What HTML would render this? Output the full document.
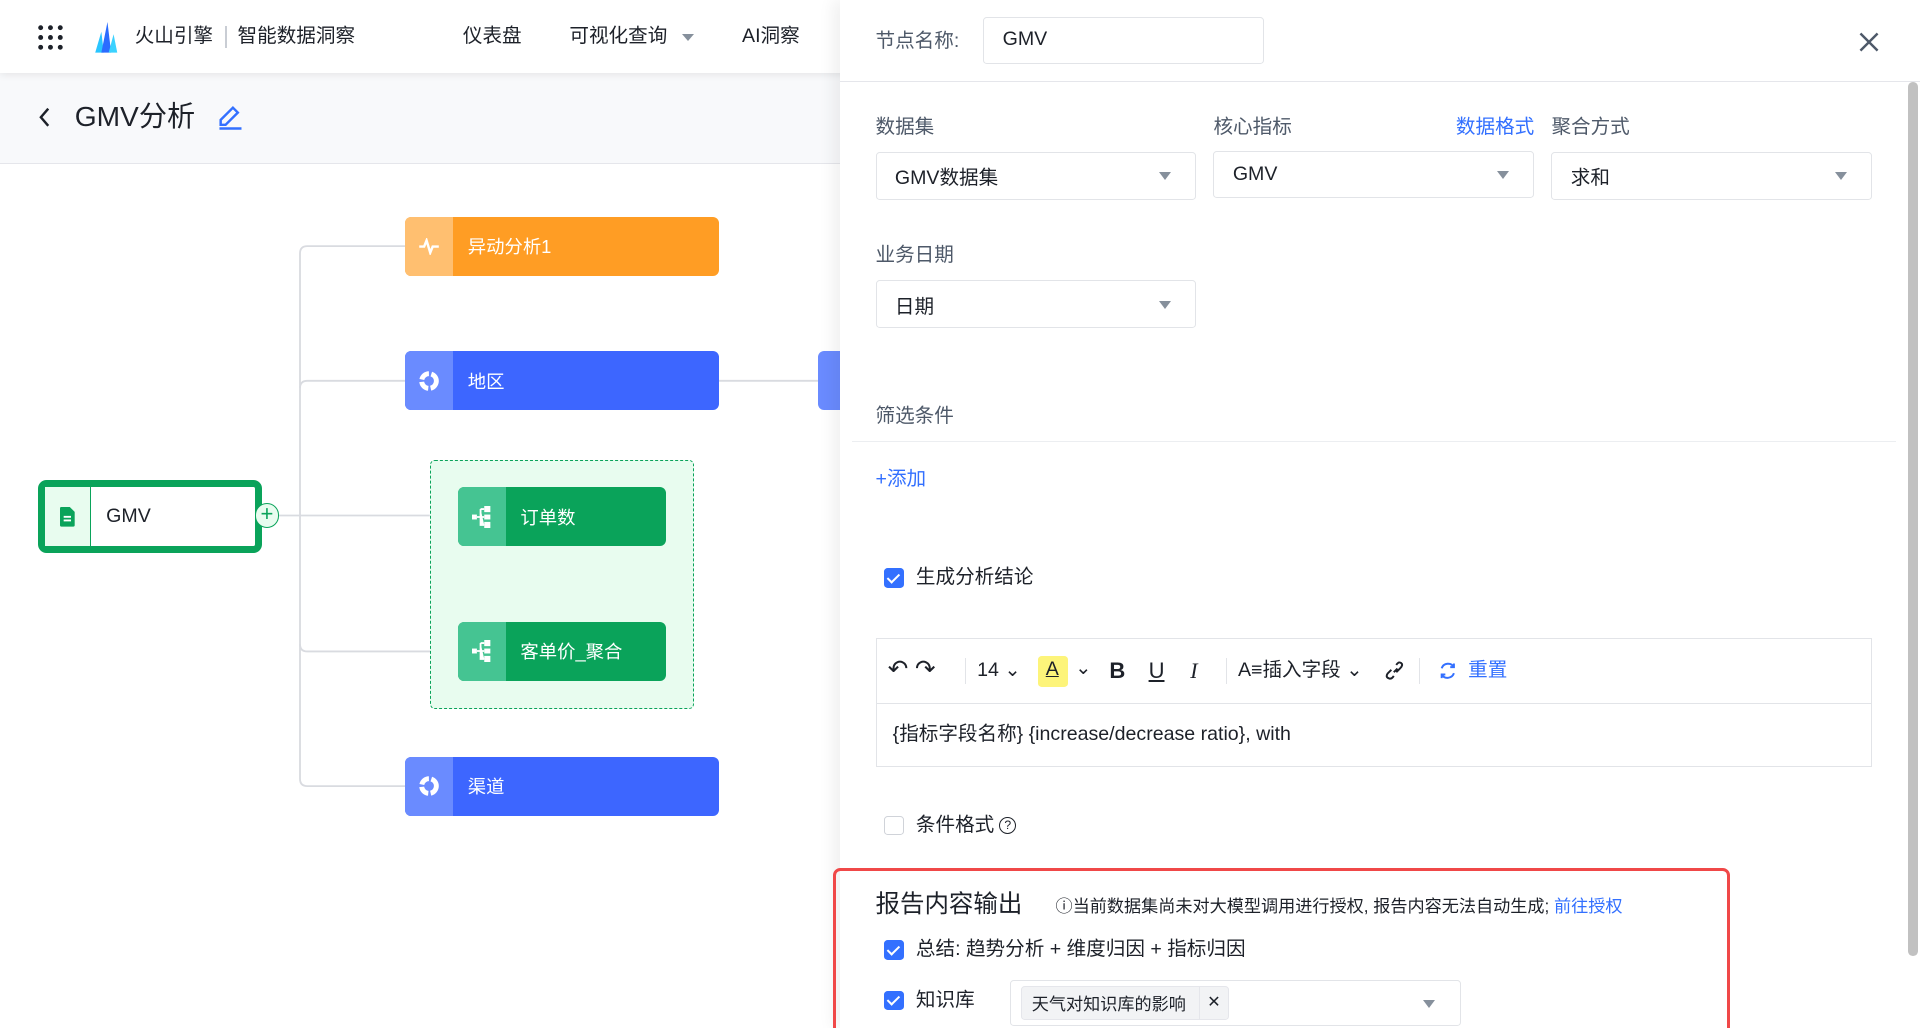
<!DOCTYPE html>
<html><head><meta charset="utf-8"><style>
*{box-sizing:border-box;margin:0;padding:0}
html,body{width:1920px;height:1028px;overflow:hidden;background:#fff}
#z{zoom:1.2245;width:1568px;height:840px;position:relative;font-family:"Liberation Sans","Noto Sans CJK SC",sans-serif;color:#1d2129;overflow:hidden}
.a{position:absolute}
.t{position:absolute;white-space:nowrap;line-height:1}
.node{position:absolute;height:48px;border-radius:5px;color:#fff;font-size:15px;display:flex;align-items:center;overflow:hidden}
.node .ic{width:39px;height:100%;display:flex;align-items:center;justify-content:center}
.node span{margin-left:12px}
.sel{position:absolute;border:1px solid #e2e4e8;border-radius:3px;height:39px;font-size:16px;display:flex;align-items:center;padding-left:15px;background:#fff}
.sel:after{content:"";position:absolute;right:20px;top:16px;border-left:5px solid transparent;border-right:5px solid transparent;border-top:7px solid #86909c}
.lbl{position:absolute;font-size:16px;color:#4e5969;line-height:1}
.cb{position:absolute;width:16px;height:16px;border-radius:3px;background:#3370ff}
.cb:after{content:"";position:absolute;left:5px;top:2px;width:4px;height:8px;border:solid #fff;border-width:0 2px 2px 0;transform:rotate(45deg)}
.cbe{position:absolute;width:16px;height:16px;border-radius:3px;border:1px solid #d0d3d9;background:#fff}
</style></head><body><div id="z">
<!-- left canvas -->
<div class="a" style="left:0;top:60px;width:700px;height:74px;background:#f8f9fb;border-bottom:1px solid #e5e6eb"></div>
<div class="a" style="left:0;top:0;width:700px;height:60px;background:#fff;box-shadow:0 2px 6px rgba(0,0,0,.08)"></div>
<svg class="a" style="left:30px;top:20px" width="22" height="22" viewBox="0 0 22 22" fill="#1d2129"><circle cx="3" cy="3" r="2"/><circle cx="11" cy="3" r="2"/><circle cx="19" cy="3" r="2"/><circle cx="3" cy="11" r="2"/><circle cx="11" cy="11" r="2"/><circle cx="19" cy="11" r="2"/><circle cx="3" cy="19" r="2"/><circle cx="11" cy="19" r="2"/><circle cx="19" cy="19" r="2"/></svg>
<svg class="a" style="left:77px;top:18px" width="20" height="26" viewBox="0 0 20 26"><path d="M1 25 L6 8 L8 25Z" fill="#2ac5ff"/><path d="M6 25 L11 0 L14 25Z" fill="#2b6cff"/><path d="M12 25 L16 10 L19 25Z" fill="#3bd2ff"/></svg>
<div class="t" style="left:110px;top:22px;font-size:16px;color:#1d2129">火山引擎</div>
<div class="a" style="left:184px;top:21px;width:1px;height:18px;background:#c9cdd4"></div>
<div class="t" style="left:194px;top:22px;font-size:16px">智能数据洞察</div>
<div class="t" style="left:378px;top:22px;font-size:16px">仪表盘</div>
<div class="t" style="left:465px;top:22px;font-size:16px">可视化查询</div>
<div class="a" style="left:557px;top:28px;border-left:5px solid transparent;border-right:5px solid transparent;border-top:6px solid #86909c"></div>
<div class="t" style="left:606px;top:22px;font-size:16px">AI洞察</div>
<svg class="a" style="left:29px;top:86px" width="14" height="20" viewBox="0 0 14 20"><path d="M10 3 L4 10 L10 17" fill="none" stroke="#1d2129" stroke-width="2"/></svg>
<div class="t" style="left:61px;top:84px;font-size:23px">GMV分析</div>
<svg class="a" style="left:177px;top:85px" width="22" height="22" viewBox="0 0 22 22"><path d="M3 17 L3 13 L13 3 L17 7 L7 17Z M2 20 L20 20" fill="none" stroke="#3370ff" stroke-width="2"/></svg>

<!-- connector lines -->
<svg class="a" style="left:0;top:0" width="700" height="840"><g fill="none" stroke="#d9dbe0" stroke-width="1.5">
<path d="M226 421 H351"/><path d="M331 201 H251 Q245 201 245 207 V636 Q245 642 251 642 H331"/><path d="M245 317 Q245 311 251 311 H331"/><path d="M245 526 Q245 532 251 532 H374"/><path d="M587 311 H668"/></g></svg>
<div class="node" style="left:331px;top:177px;width:256px;background:#ff9d24"><div class="ic" style="background:#ffbf70"><svg width="18" height="14" viewBox="0 0 18 14"><path d="M1 7 H5 L7 2 L10 12 L12 7 H17" fill="none" stroke="#fff" stroke-width="2"/></svg></div><span>异动分析1</span></div>
<div class="node" style="left:331px;top:287px;width:256px;background:#3d66ff"><div class="ic" style="background:#6a8bff"><svg width="18" height="18" viewBox="0 0 18 18"><circle cx="9" cy="9" r="6" fill="none" stroke="#fff" stroke-width="4" stroke-dasharray="8 2"/></svg></div><span>地区</span></div>
<div class="node" style="left:668px;top:287px;width:40px;background:#6a8bff"></div>
<div class="a" style="left:351px;top:376px;width:216px;height:203px;background:#e8fcef;border:1.5px dashed #0aa35a;border-radius:4px"></div>
<div class="node" style="left:374px;top:398px;width:170px;background:#0aa35a"><div class="ic" style="background:#45c492"><svg width="16" height="18" viewBox="0 0 16 18" fill="#fff"><rect x="0" y="7" width="4" height="4"/><rect x="10" y="0" width="5" height="5"/><rect x="10" y="7" width="5" height="4"/><rect x="10" y="13" width="5" height="5"/><path d="M4 9 H10 M7 2.5 V15.5 H10 M7 2.5 H10" stroke="#fff" stroke-width="1.5"/></svg></div><span>订单数</span></div>
<div class="node" style="left:374px;top:508px;width:170px;background:#0aa35a"><div class="ic" style="background:#45c492"><svg width="16" height="18" viewBox="0 0 16 18" fill="#fff"><rect x="0" y="7" width="4" height="4"/><rect x="10" y="0" width="5" height="5"/><rect x="10" y="7" width="5" height="4"/><rect x="10" y="13" width="5" height="5"/><path d="M4 9 H10 M7 2.5 V15.5 H10 M7 2.5 H10" stroke="#fff" stroke-width="1.5"/></svg></div><span>客单价_聚合</span></div>
<div class="node" style="left:331px;top:618px;width:256px;background:#3d66ff"><div class="ic" style="background:#6a8bff"><svg width="18" height="18" viewBox="0 0 18 18"><circle cx="9" cy="9" r="6" fill="none" stroke="#fff" stroke-width="4" stroke-dasharray="8 2"/></svg></div><span>渠道</span></div>
<div class="a" style="left:31px;top:392px;width:183px;height:60px;border:6px solid #0aa35a;border-radius:7px;background:#fff;display:flex;align-items:center">
<div style="width:38px;height:100%;background:#e8fcef;border-right:1.5px solid #0aa35a;display:flex;align-items:center;justify-content:center"><svg width="12" height="16" viewBox="0 0 12 16"><path d="M0 1 Q0 0 1 0 H8 L12 4 V15 Q12 16 11 16 H1 Q0 16 0 15Z" fill="#0aa35a"/><path d="M3 8 H9 M3 11 H9" stroke="#fff" stroke-width="1.5"/></svg></div>
<span style="margin-left:12px;font-size:16px">GMV</span></div>
<div class="a" style="left:208px;top:411px;width:20px;height:20px;border-radius:50%;background:#e8fcef;border:1.5px solid #0aa35a"></div>
<div class="t" style="left:212px;top:411px;font-size:18px;color:#0aa35a;width:12px;text-align:center">+</div>

<!-- right panel -->
<div class="a" style="left:686px;top:0;width:882px;height:840px;background:#fff;box-shadow:-6px 0 12px rgba(0,0,0,.06)"></div>
<div class="a" style="left:686px;top:66px;width:882px;height:1px;background:#e5e6eb"></div>
<div class="a" style="left:1558px;top:67px;width:8px;height:714px;background:#c1c1c1;border-radius:4px"></div>
<div class="lbl" style="left:715px;top:26px">节点名称:</div>
<div class="a" style="left:803px;top:14px;width:229px;height:38px;border:1px solid #e2e4e8;border-radius:3px;font-size:16px;padding:10px 15px;line-height:1">GMV</div>
<svg class="a" style="left:1517px;top:25px" width="18" height="18" viewBox="0 0 18 18"><path d="M2 2 L16 16 M16 2 L2 16" stroke="#4e5969" stroke-width="2"/></svg>
<div class="lbl" style="left:715px;top:96px">数据集</div>
<div class="lbl" style="left:991px;top:96px">核心指标</div>
<div class="lbl" style="left:1189px;top:96px;color:#3370ff">数据格式</div>
<div class="lbl" style="left:1267px;top:96px">聚合方式</div>
<div class="sel" style="left:715px;top:124px;width:262px">GMV数据集</div>
<div class="sel" style="left:991px;top:123px;width:262px">GMV</div>
<div class="sel" style="left:1267px;top:124px;width:262px">求和</div>
<div class="lbl" style="left:715px;top:201px">业务日期</div>
<div class="sel" style="left:715px;top:229px;width:262px">日期</div>
<div class="lbl" style="left:715px;top:332px">筛选条件</div>
<div class="a" style="left:696px;top:360px;width:852px;height:1px;background:#eceef1"></div>
<div class="lbl" style="left:715px;top:384px;color:#3370ff">+添加</div>
<div class="cb" style="left:722px;top:464px"></div>
<div class="t" style="left:748px;top:464px;font-size:16px">生成分析结论</div>
<div class="a" style="left:715px;top:521px;width:814px;height:105px;border:1px solid #e2e4e8"></div>
<div class="a" style="left:716px;top:574px;width:812px;height:1px;background:#e2e4e8"></div>
<div class="t" style="left:725px;top:537px;font-size:20px;color:#1d2129">↶ ↷</div>
<div class="a" style="left:788px;top:537px;width:1px;height:22px;background:#e2e4e8"></div>
<div class="t" style="left:798px;top:540px;font-size:16px">14 ⌄</div>
<div class="a" style="left:848px;top:536px;width:24px;height:25px;background:#fdf47a;border-radius:3px"></div>
<div class="t" style="left:854px;top:539px;font-size:16px;text-decoration:underline">A</div>
<div class="t" style="left:878px;top:538px;font-size:16px">⌄</div>
<div class="t" style="left:906px;top:539px;font-size:18px;font-weight:bold">B</div>
<div class="t" style="left:938px;top:539px;font-size:18px;text-decoration:underline">U</div>
<div class="t" style="left:972px;top:539px;font-size:18px;font-style:italic;font-family:'Liberation Serif',serif">I</div>
<div class="a" style="left:1001px;top:537px;width:1px;height:22px;background:#e2e4e8"></div>
<div class="t" style="left:1011px;top:540px;font-size:16px">A≡插入字段 ⌄</div>
<svg class="a" style="left:1130px;top:539px" width="18" height="18" viewBox="0 0 18 18"><path d="M8 10 L11 7 M6 8 L3 11 Q1 14 4 15 Q6 16 8 13 M10 10 L13 7 Q16 4 14 2.5 Q12 1 10 4" fill="none" stroke="#1d2129" stroke-width="1.6"/></svg>
<div class="a" style="left:1159px;top:537px;width:1px;height:22px;background:#e2e4e8"></div>
<svg class="a" style="left:1174px;top:540px" width="16" height="16" viewBox="0 0 16 16"><path d="M3 6 A5.5 5.5 0 0 1 13 5 M13 10 A5.5 5.5 0 0 1 3 11 M13 2 V5 H10 M3 14 V11 H6" fill="none" stroke="#3370ff" stroke-width="1.6"/></svg>
<div class="t" style="left:1199px;top:540px;font-size:16px;color:#3370ff">重置</div>
<div class="t" style="left:729px;top:592px;font-size:16px">{指标字段名称} {increase/decrease ratio}, with</div>
<div class="cbe" style="left:722px;top:666px"></div>
<div class="t" style="left:748px;top:666px;font-size:16px">条件格式</div>
<div class="a" style="left:816px;top:667px;width:14px;height:14px;border:1.4px solid #1d2129;border-radius:50%;font-size:10px;text-align:center;line-height:12px">?</div>
<div class="a" style="left:680px;top:709px;width:733px;height:150px;border:3px solid #f04848;border-radius:6px"></div>
<div class="t" style="left:715px;top:729px;font-size:20px">报告内容输出</div>
<div class="t" style="left:862px;top:733px;font-size:14px;color:#1d2129">ⓘ当前数据集尚未对大模型调用进行授权, 报告内容无法自动生成; <span style="color:#3370ff">前往授权</span></div>
<div class="cb" style="left:722px;top:768px"></div>
<div class="t" style="left:748px;top:768px;font-size:16px">总结: 趋势分析 + 维度归因 + 指标归因</div>
<div class="cb" style="left:722px;top:809px"></div>
<div class="t" style="left:748px;top:809px;font-size:16px">知识库</div>
<div class="sel" style="left:825px;top:800px;width:368px;height:38px;padding-left:8px"><div style="background:#f2f3f5;border:1px solid #e5e6eb;border-radius:3px;height:28px;width:170px;font-size:14px;display:flex;align-items:center;padding-left:8px;position:relative">天气对知识库的影响<span style="position:absolute;right:0;top:0;width:24px;height:26px;border-left:1px solid #e5e6eb;text-align:center;line-height:26px;font-size:13px">✕</span></div></div>
</div></body></html>
